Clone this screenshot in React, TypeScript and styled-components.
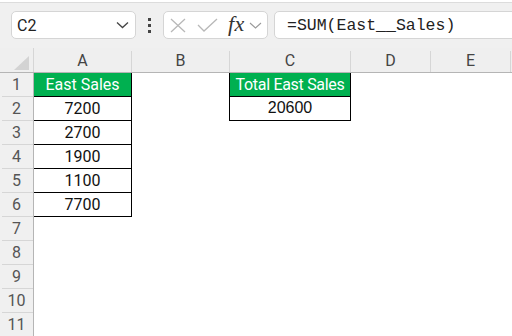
import React from "react";
import styled, {createGlobalStyle} from "styled-components";

const GlobalStyle = createGlobalStyle`
  html, body {
    margin: 0;
    padding: 0;
    background: #ffffff;
    overflow: hidden;
  }
  * {
    box-sizing: border-box;
  }
`

// F column is only a sliver at the right edge, no label visible
const columns = [
    {name: "A", width: 98},
    {name: "B", width: 98},
    {name: "C", width: 121},
    {name: "D", width: 80},
    {name: "E", width: 80},
    {name: "", width: 80},
]
const rowNumbers = [1, 2, 3, 4, 5, 6, 7, 8, 9, 10, 11]

const eastSales = ["7200", "2700", "1900", "1100", "7700"]

export default function App(): JSX.Element {
    return (
        <Page>
            <GlobalStyle/>
            <TopStrip/>
            <Toolbar>
                <NameBox>
                    <NameText>C2</NameText>
                    <svg width="13" height="8" viewBox="0 0 13 8">
                        <path d="M1 1.5 L6.5 6.5 L12 1.5" fill="none" stroke="#444" strokeWidth="1.3"/>
                    </svg>
                </NameBox>
                <Kebab>
                    <Dot/><Dot/><Dot/>
                </Kebab>
                <FxGroup>
                    <svg width="16" height="15" viewBox="0 0 16 15">
                        <path d="M1 1 L15 14 M15 1 L1 14" stroke="#b8b8b8" strokeWidth="1.3"/>
                    </svg>
                    <svg width="21" height="14" viewBox="0 0 21 14">
                        <path d="M1 7 L7 13 L20 1" fill="none" stroke="#b8b8b8" strokeWidth="1.3"/>
                    </svg>
                    <FxLabel>fx</FxLabel>
                    <svg width="13" height="7" viewBox="0 0 13 7">
                        <path d="M1 1 L6.5 6 L12 1" fill="none" stroke="#9a9a9a" strokeWidth="1.1"/>
                    </svg>
                </FxGroup>
                <FormulaBox>=SUM(East__Sales)</FormulaBox>
            </Toolbar>
            <Sheet>
                <ColHeaderRow>
                    <Corner>
                        <svg width="16" height="14" viewBox="0 0 16 14">
                            <polygon points="15,0 15,14 0,14" fill="#d3d3d3"/>
                        </svg>
                    </Corner>
                    {columns.map((c, i) => (
                        <ColHeader key={i} $width={c.width}>{c.name}</ColHeader>
                    ))}
                </ColHeaderRow>
                <Body>
                    <RowHeaders>
                        {rowNumbers.map(n => (
                            <RowHeader key={n}>{n}</RowHeader>
                        ))}
                    </RowHeaders>
                    <Cells>
                        <DataTable $col={1} $rows={6} $leftBorder={false}>
                            <HeadCell>East Sales</HeadCell>
                            {eastSales.map((v, i) => (
                                <DataCell key={i}>{v}</DataCell>
                            ))}
                        </DataTable>
                        <DataTable $col={3} $rows={2} $leftBorder={true}>
                            <HeadCell $tight>Total East Sales</HeadCell>
                            <DataCell $arial>20600</DataCell>
                        </DataTable>
                    </Cells>
                </Body>
            </Sheet>
        </Page>
    )
}

const Page = styled.div`
  width: 512px;
  height: 336px;
  display: flex;
  flex-direction: column;
  background: #f0f0f0;
  overflow: hidden;
  font-family: Roboto, "Noto Sans", sans-serif;
`
const TopStrip = styled.div`
  height: 3px;
  flex: none;
  background: #ffffff;
  border-bottom: 1px solid #dcdcdc;
`
const Toolbar = styled.div`
  height: 45px;
  flex: none;
  display: flex;
  align-items: flex-start;
  padding: 8px 0 0 11px;
`
const NameBox = styled.div`
  width: 125px;
  height: 28px;
  background: #ffffff;
  border: 1px solid #d5d5d5;
  border-radius: 5px;
  display: flex;
  align-items: center;
  justify-content: space-between;
  padding: 0 6px 0 5px;
`
const NameText = styled.span`
  font-size: 16px;
  color: #222222;
`
const Kebab = styled.div`
  width: 27px;
  height: 28px;
  display: flex;
  flex-direction: column;
  align-items: center;
  justify-content: center;
  gap: 3px;
`
const Dot = styled.span`
  width: 3px;
  height: 3px;
  background: #444444;
`
const FxGroup = styled.div`
  width: 105px;
  height: 28px;
  background: #ffffff;
  border: 1px solid #d5d5d5;
  border-radius: 5px;
  display: flex;
  align-items: center;
  padding: 0 3px 0 6px;
  gap: 10px;

  & > svg:nth-child(2) {
    margin-left: 1px;
  }

  & > svg:last-child {
    margin-left: -6px;
  }
`
const FxLabel = styled.span`
  font-family: "Liberation Serif", "DejaVu Serif", serif;
  font-style: italic;
  font-size: 22px;
  color: #333333;
  line-height: 1;
  margin-top: -3px;
  letter-spacing: 0.5px;
`
const FormulaBox = styled.div`
  flex: 1;
  height: 28px;
  margin-left: 6px;
  margin-right: -10px;
  background: #ffffff;
  border: 1px solid #d5d5d5;
  border-radius: 5px;
  display: flex;
  align-items: center;
  padding-left: 12px;
  font-family: "Liberation Mono", "DejaVu Sans Mono", monospace;
  font-size: 16.5px;
  color: #222222;
`
const Sheet = styled.div`
  flex: 1;
  display: flex;
  flex-direction: column;
`
const ColHeaderRow = styled.div`
  height: 25px;
  flex: none;
  display: flex;
  background: #efefef;
  border-bottom: 1px solid #b5b5b5;
`
const Corner = styled.div`
  width: 34px;
  flex: none;
  display: flex;
  align-items: flex-end;
  justify-content: flex-end;
  padding: 0 3px 2px 0;
  border-right: 1px solid #d6d6d6;
`
const ColHeader = styled.div<{ $width: number }>`
  width: ${p => p.$width}px;
  flex: none;
  display: flex;
  align-items: center;
  justify-content: center;
  font-size: 16px;
  color: #444444;
  border-right: 1px solid #d6d6d6;
  margin-top: 3px;
  padding-bottom: 3px;
`
const Body = styled.div`
  flex: 1;
  display: flex;
  background: #ffffff;
`
const RowHeaders = styled.div`
  width: 34px;
  flex: none;
  background: #f0f0f0;
  border-right: 1px solid #b5b5b5;
  display: flex;
  flex-direction: column;
`
const RowHeader = styled.div`
  height: 24px;
  flex: none;
  display: flex;
  align-items: center;
  justify-content: center;
  font-size: 16px;
  color: #555555;
  border-bottom: 1px solid #d6d6d6;
  margin-left: 2px;
  padding-right: 2px;
`
const Cells = styled.div`
  flex: 1;
  display: grid;
  grid-template-columns: 98px 98px 121px 80px 80px 80px;
  grid-auto-rows: 24px;
  align-content: start;
`
const DataTable = styled.div<{ $col: number, $rows: number, $leftBorder: boolean }>`
  grid-column: ${p => p.$col};
  grid-row: 1 / span ${p => p.$rows};
  display: flex;
  flex-direction: column;
  margin-left: ${p => p.$leftBorder ? "-1px" : "0"};
  border-left: ${p => p.$leftBorder ? "1px solid #000" : "none"};
`
const DataCell = styled.div<{ $arial?: boolean }>`
  height: 24px;
  flex: none;
  display: flex;
  align-items: center;
  justify-content: center;
  border-right: 1px solid #000000;
  border-bottom: 1px solid #000000;
  font-family: ${p => p.$arial ? `"Liberation Sans", Arial, sans-serif` : `Roboto, "Noto Sans", sans-serif`};
  font-size: 16px;
  color: #111111;
  padding-bottom: 1px;
`
const HeadCell = styled(DataCell)<{ $tight?: boolean }>`
  background: #00b050;
  color: #ffffff;
  letter-spacing: ${p => p.$tight ? "-0.3px" : "0"};
`
